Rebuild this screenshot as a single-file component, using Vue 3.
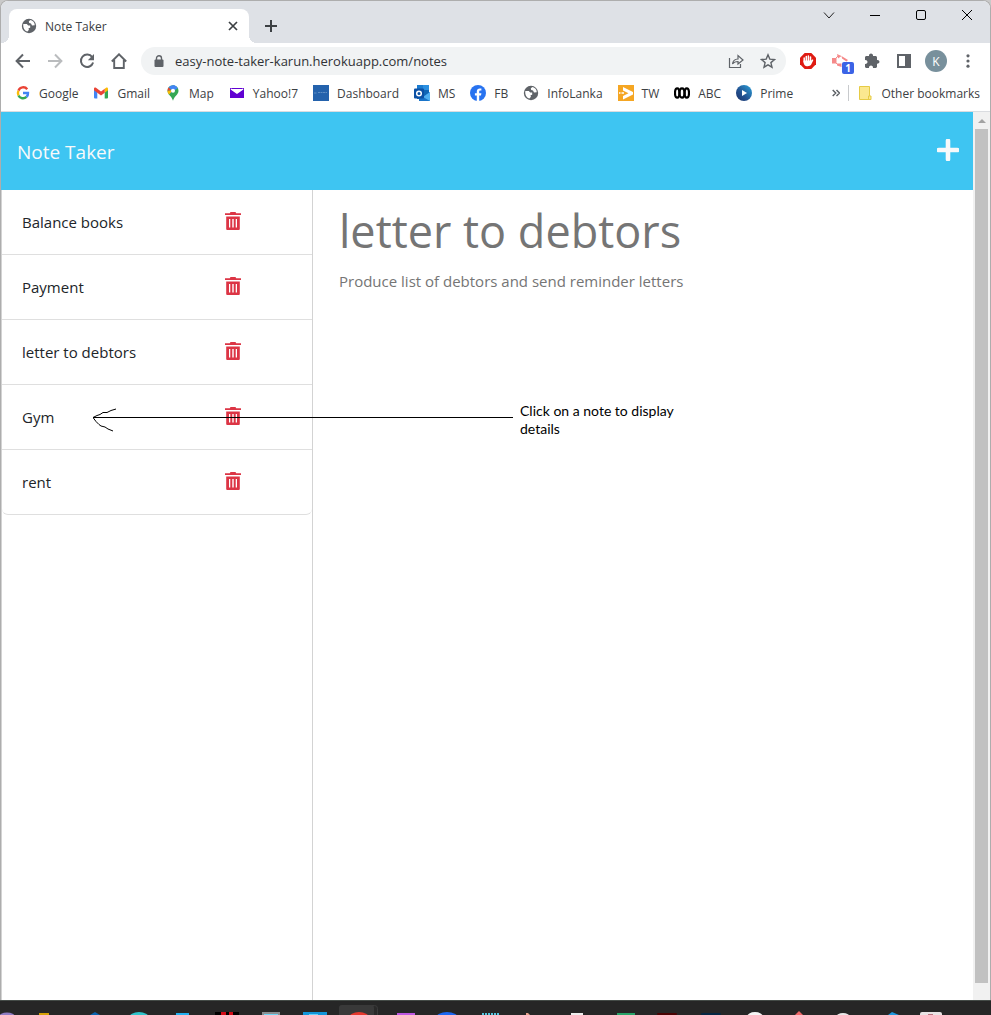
<script setup>
import { ref } from 'vue'

const notes = ref([
  { id: 1, title: 'Balance books' },
  { id: 2, title: 'Payment' },
  { id: 3, title: 'letter to debtors' },
  { id: 4, title: 'Gym' },
  { id: 5, title: 'rent' },
])
const activeTitle = ref('letter to debtors')
const activeText = ref('Produce list of debtors and send reminder letters')
const address = 'easy-note-taker-karun.herokuapp.com/notes'
</script>

<template>
  <div class="desktop">
    <div class="window">
      <header class="tabstrip">
        <div class="tab">
          <svg class="i16" viewBox="0 0 16 16"><circle cx="8" cy="8" r="7.2" fill="#5f6368" /><path d="M2.300 6h3.500l1.400 1.500h2v2.200l-1.700.6.400 1.400L6.500 13.600C3.800 12.800 1.800 10 2.300 6zM9.500 2.100 7.800 3.300l.4 1.700 1.800.6 1 1.800 2.800-.1C13.600 4.500 12 2.600 9.500 2.100z" fill="#fff" /></svg>
          <span class="tab-title">Note Taker</span>
          <button class="bare" aria-label="Close tab"><svg width="10" height="10" viewBox="0 0 10 10"><path d="M1 1l8 8M9 1L1 9" stroke="#3c4043" stroke-width="1.700" /></svg></button>
        </div>
        <button class="bare newtab" aria-label="New tab"><svg width="12" height="12" viewBox="0 0 12 12"><path d="M6 0v12M0 6h12" stroke="#3c4043" stroke-width="2" /></svg></button>
        <div class="controls">
          <button class="bare" aria-label="Search tabs"><svg width="12" height="12" viewBox="0 0 12 12"><path d="M1 3.500l5 5.500 5-5.500" stroke="#222" fill="none" /></svg></button>
          <button class="bare" aria-label="Minimize"><svg width="12" height="12" viewBox="0 0 12 12"><path d="M1 6.500h10" stroke="#000" /></svg></button>
          <button class="bare" aria-label="Maximize"><svg width="12" height="12" viewBox="0 0 12 12"><rect x="1.500" y="1.500" width="9" height="9" rx="1.500" stroke="#000" fill="none" /></svg></button>
          <button class="bare" aria-label="Close"><svg width="12" height="12" viewBox="0 0 12 12"><path d="M1 1l10 10M11 1L1 11" stroke="#000" /></svg></button>
        </div>
      </header>

      <div class="toolbar">
        <nav class="navs" aria-label="Navigation">
          <button class="bare" aria-label="Back"><svg class="i16" viewBox="0 0 16 16"><path d="M15 8H2M8 1.500L1.600 8 8 14.500" stroke="#5f6368" stroke-width="2" fill="none" /></svg></button>
          <button class="bare" aria-label="Forward"><svg class="i16" viewBox="0 0 16 16"><path d="M1 8h13M8 1.500L14.400 8 8 14.500" stroke="#babcbe" stroke-width="2" fill="none" /></svg></button>
          <button class="bare" aria-label="Reload"><svg class="i16" viewBox="0 0 16 16"><path d="M13.200 4.200A6.200 6.200 0 1 0 14.100 9.500" stroke="#5f6368" stroke-width="2" fill="none" /><path d="M15 1v6.200H8.800z" fill="#5f6368" /></svg></button>
          <button class="bare" aria-label="Home"><svg class="i16" viewBox="0 0 16 16"><path d="M.8 8.500L8 1.300l7.200 7.200M3.200 7v8h9.600V7" stroke="#5f6368" stroke-width="1.900" fill="none" /></svg></button>
        </nav>
        <div class="omnibox">
          <svg class="lock" width="10" height="12" viewBox="0 0 10 12"><rect x=".5" y="4.500" width="9" height="7.500" rx="1" fill="#5f6368" /><path d="M2.500 5V3.200a2.500 2.500 0 0 1 5 0V5" stroke="#5f6368" stroke-width="1.400" fill="none" /></svg>
          <input class="address" :value="address" aria-label="Address" />
          <button class="bare" aria-label="Share"><svg class="i16" viewBox="0 0 16 16"><path d="M1.500 5v9.500h11V11M4.500 11c.4-3.400 2.500-4.900 5.500-5V2.500L15 7l-5 4V8.500c-2.500 0-4.300.8-5.500 2.500z" stroke="#5f6368" stroke-width="1.200" fill="none" /></svg></button>
          <button class="bare" aria-label="Bookmark"><svg class="i16" viewBox="0 0 16 16"><path d="M8 1.800l1.800 4.300 4.700.4-3.600 3.100 1.100 4.600L8 11.800l-4 2.400 1.100-4.600-3.600-3.100 4.700-.4z" stroke="#5f6368" stroke-width="1.400" fill="none" /></svg></button>
        </div>
        <div class="extensions">
          <button class="bare" aria-label="Ad blocker"><svg class="i16" viewBox="0 0 16 16"><path d="M4.700 0h6.600L16 4.700v6.600L11.300 16H4.700L0 11.300V4.700z" fill="#df1b12" /><path d="M4.200 9V5M6.300 8V3.500M8.400 8V3M10.500 8.500V4" stroke="#fff" stroke-width="1.500" stroke-linecap="round" /><path d="M3.500 7.500h7.700l1-.9c.7-.4 1.300.2 1 .8l-2 4.200c-1 2-5.200 2.200-6.500.6-1-1.200-1.200-2.700-1.200-4.700z" fill="#fff" /></svg></button>
          <button class="bare ext" aria-label="Extension, 1 notice">
            <svg class="i16" viewBox="0 0 16 16"><path d="M0 5h4.500v5.500H0zM5 1l4.500 2-3.500 2.500zM9.500 3L16 7l-1.500 1.500L10 5.500zM5 10.500h4.500V14L5 12.500z" fill="#f58a8a" /><path d="M4 5l2-2M4 10l2 2" stroke="#f58a8a" /></svg>
            <span class="badge">1</span>
          </button>
          <button class="bare" aria-label="Extensions"><svg class="i16" viewBox="0 0 16 16"><path d="M1 4.500C1 3.700 1.600 3 2.500 3H5c-.5-3.500 4.500-3.500 4 0h2.500c.8 0 1.500.7 1.500 1.500V7c3.300-.3 3.300 4 0 3.800v2.700c0 .8-.7 1.500-1.500 1.500H9c.2-3.300-4.200-3.300-4 0H2.500c-.8 0-1.500-.7-1.500-1.500V11c3.300.2 3.300-4 0-3.900z" fill="#5f6368" /></svg></button>
          <button class="bare" aria-label="Side panel"><svg class="i16" viewBox="0 0 16 16"><path d="M1 1h14v14H1zM3 3v10h6V3z" fill="#5f6368" fill-rule="evenodd" /></svg></button>
          <button class="avatar" aria-label="Profile">K</button>
          <button class="bare" aria-label="Menu"><svg class="i16" viewBox="0 0 16 16" fill="#5f6368"><circle cx="8" cy="2.800" r="1.600" /><circle cx="8" cy="8" r="1.600" /><circle cx="8" cy="13.200" r="1.600" /></svg></button>
        </div>
      </div>

      <nav class="bookmarks" aria-label="Bookmarks">
        <a href="#"><svg class="i16" viewBox="0 0 16 16" fill="none" stroke-width="2.400"><path d="M12.200 4.200A5 5 0 0 0 3.500 5.700" stroke="#ea4335" /><path d="M3.500 5.700a5 5 0 0 0 0 4.700" stroke="#fbbc05" /><path d="M3.500 10.400a5 5 0 0 0 8 1.500" stroke="#34a853" /><path d="M11.500 11.900A5 5 0 0 0 13 8H8" stroke="#4285f4" /></svg>Google</a>
        <a href="#"><svg class="i16" viewBox="0 0 16 16"><path d="M1 4.500l3.300 2.400V13.500H2a1 1 0 0 1-1-1z" fill="#4285f4" /><path d="M15 4.500l-3.300 2.400v6.600H14a1 1 0 0 0 1-1z" fill="#34a853" /><path d="M11.700 3.700L13 2.700c.8-.6 2 0 2 1v1.500l-3.300 2.500z" fill="#fbbc04" /><path d="M1 3.700c0-1.200 1.200-1.600 2-1L8 6.400l3.700-2.700v4L8 10.400 4.300 7.700 1 5.200z" fill="#ea4335" /></svg>Gmail</a>
        <a href="#"><svg class="i16" viewBox="0 0 16 16"><path d="M8 .2a5.500 5.500 0 0 1 5.500 5.500c0 4-4.300 5.300-5.500 10.100-1.200-4.800-5.500-6.100-5.500-10.100A5.500 5.500 0 0 1 8 .2z" fill="#34a853" /><path d="M3.700 9.200L12.800 3.200A5.500 5.500 0 0 0 8 .2z" fill="#4285f4" /><path d="M2.500 5.700c0 1.500.6 2.700 1.600 3.900L8 5z" fill="#fbbc04" /><path d="M3.700 2.200A5.500 5.500 0 0 0 2.500 5.700L6 5z" fill="#ea4335" /><path d="M8 .2a5.500 5.500 0 0 0-4.300 2L6.500 5 10 .6z" fill="#4285f4" /><circle cx="8" cy="5.700" r="2" fill="#fff" /></svg>Map</a>
        <a href="#"><svg class="i16" viewBox="0 0 16 16"><rect x="1" y="3" width="14" height="10" rx=".5" fill="#6001d2" /><path d="M2 4l6 4 6-4" stroke="#fff" stroke-width="1.500" fill="#fff" /></svg>Yahoo!7</a>
        <a href="#"><svg class="i16" viewBox="0 0 16 16"><path d="M0 0h16v16H0z" fill="#2462ac" /><path d="M1 8h3M5 7.500h9" stroke="#5d8dc4" stroke-dasharray="2 .5" /></svg>Dashboard</a>
        <a href="#"><svg class="i16" viewBox="0 0 16 16"><path d="M3 0h12v14H3z" fill="#1066b5" /><path d="M9 0h6v5H9z" fill="#2b8fe0" /><path d="M3 0h6v4H3z" fill="#1a7bd0" /><path d="M5 8l5 3 6-4v9H5z" fill="#1a74c9" /><path d="M9 12l7-5v9z" fill="#50b0f1" /><rect y="3.500" width="10" height="10" rx="1" fill="#0c51a5" /><circle cx="5" cy="8.500" r="2.300" stroke="#fff" stroke-width="1.500" fill="none" /></svg>MS</a>
        <a href="#"><svg class="i16" viewBox="0 0 16 16"><circle cx="8" cy="8" r="8" fill="#2873f0" /><path d="M6.800 16v-5.500H4.900V8.200h1.900V6.500c0-2 1.200-3.100 3-3.100l1.600.1v2h-.9c-1 0-1.300.6-1.300 1.200v1.500h2.200l-.4 2.300H9.200V16z" fill="#fff" /></svg>FB</a>
        <a href="#"><svg class="i16" viewBox="0 0 16 16"><circle cx="8" cy="8" r="7.200" fill="#5f6368" /><path d="M2.300 6h3.500l1.400 1.500h2v2.200l-1.700.6.400 1.400L6.500 13.600C3.800 12.800 1.800 10 2.300 6zM9.500 2.100 7.800 3.300l.4 1.700 1.800.6 1 1.800 2.800-.1C13.600 4.500 12 2.600 9.500 2.100z" fill="#fff" /></svg>InfoLanka</a>
        <a href="#"><svg class="i16" viewBox="0 0 16 16"><path d="M0 0h16v16H0z" fill="#f5a623" /><path d="M5 2l10 5v2.500L5 14.500V11l5.500-2.700L5 5.500z" fill="#fff" /><path d="M1 8h1.500M3.500 8H6" stroke="#fff" stroke-width="1.500" /></svg>TW</a>
        <a href="#"><svg class="i16" viewBox="0 0 16 16" fill="none" stroke="#000" stroke-width="2.200"><ellipse cx="3.200" cy="8" rx="2.200" ry="4.700" /><ellipse cx="8" cy="8" rx="2.500" ry="4.700" /><ellipse cx="12.800" cy="8" rx="2.200" ry="4.700" /></svg>ABC</a>
        <a href="#"><svg class="i16" viewBox="0 0 16 16"><defs><linearGradient id="prime" x1="1" y1="0" x2="0" y2="1"><stop offset="0" stop-color="#2ba3dc" /><stop offset=".6" stop-color="#22508f" /><stop offset="1" stop-color="#1c3369" /></linearGradient></defs><circle cx="8" cy="8" r="8" fill="url(#prime)" /><path d="M6 5l5 3-5 3z" fill="#fff" /></svg>Prime</a>
        <div class="other">
          <button class="bare" aria-label="More bookmarks"><svg width="8" height="8" viewBox="0 0 8 8"><path d="M.7 1l3 3-3 3M4.500 1l3 3-3 3" stroke="#5f6368" stroke-width="1.500" fill="none" /></svg></button>
          <span class="divider"></span>
          <a href="#"><svg class="i16" viewBox="0 0 16 16"><path d="M2.500 1.500h10v9.500h1.500v3.500H2.500z" fill="#fbe88f" stroke="#e6cb45" /><path d="M11.500 14.500V11h1" stroke="#e6cb45" fill="none" /></svg>Other bookmarks</a>
        </div>
      </nav>

      <div class="viewport">
        <main class="page">
          <header class="banner">
            <a class="brand" href="#">Note Taker</a>
            <button class="bare" aria-label="New note"><svg width="22" height="22" viewBox="0 0 22 22"><path d="M11 1.800v18.400M1.800 11h18.400" stroke="#f8f9fa" stroke-width="4.600" stroke-linecap="round" /></svg></button>
          </header>
          <div class="columns">
            <aside class="sidebar">
              <ul class="notes">
                <li v-for="note in notes" :key="note.id" class="note">
                  <button class="bare note-title">{{ note.title }}</button>
                  <button class="bare trash" :aria-label="'Delete ' + note.title">
                    <svg width="16" height="18" viewBox="0 0 16 18"><path d="M5.500 0h5l.7 1.200H16V3H0V1.200h4.800zM1.200 4.500h13.600V17q0 1-1 1H2.200q-1 0-1-1zM4 7v8.500h1.300V7zM7.300 7v8.500h1.400V7zM10.700 7v8.500H12V7z" fill="#dc3545" fill-rule="evenodd" /></svg>
                  </button>
                </li>
              </ul>
            </aside>
            <section class="detail">
              <input class="detail-title" :value="activeTitle" aria-label="Note title" readonly />
              <textarea class="detail-text" :value="activeText" aria-label="Note text" readonly></textarea>
            </section>
          </div>
          <div class="callout">
            <svg width="420" height="24" viewBox="0 0 420 24" fill="none" stroke="#000"><path d="M0 9.500h420" /><path d="M0 9.500l4-2 3-1 3-2h4l4-2 5-1.500M0 9.500l3 4 3 3 2 1.500 4 1 3 2 5 2" /></svg>
            <p>Click on a note to display details</p>
          </div>
        </main>
        <div class="scrollbar">
          <svg width="8" height="4" viewBox="0 0 8 4"><path d="M0 4l4-4 4 4z" fill="#a3a3a3" /></svg>
          <span class="thumb"></span>
        </div>
      </div>
    </div>
    <footer class="taskbar">
      <svg width="991" height="14" viewBox="0 0 991 14">
        <rect x="339.500" y="4.500" width="38" height="20" rx="3" fill="#292929" stroke="#3b3b3b" />
        <rect x="339" y="4" width="35" height="20" rx="3" fill="#393939" />
        <ellipse cx="7" cy="16" rx="8" ry="4.500" fill="#8e7cc3" />
        <rect x="39" y="12" width="10" height="2" fill="#d6a106" />
        <path d="M90 14l5-3 5 3z" fill="#0b63ae" />
        <ellipse cx="139" cy="17" rx="10" ry="6" fill="#2fc4cb" />
        <rect x="176" y="12" width="13" height="2" fill="#22b1f2" />
        <rect x="215" y="11" width="24" height="3" fill="#000" /><path d="M221 11h5v3h-5zM229 11h4v3h-4z" fill="#d10d18" />
        <rect x="262" y="11" width="18" height="3" fill="#8b8f92" /><rect x="264" y="13" width="14" height="1" fill="#6fd5f5" />
        <rect x="303" y="11" width="24" height="3" fill="#1195d9" /><rect x="309" y="13" width="9" height="1" fill="#65d0fa" />
        <ellipse cx="359" cy="17" rx="10" ry="6" fill="#e6392e" />
        <rect x="397" y="12" width="18" height="2" fill="#bd57e2" />
        <ellipse cx="447" cy="17" rx="11" ry="6" fill="#1b67f2" />
        <path d="M482 13h18" stroke="#53c5df" stroke-width="2" stroke-dasharray="2 1" />
        <path d="M526 14v-2h2l2 2z" fill="#e6a38c" />
        <rect x="571" y="12" width="12" height="2" fill="#eee" />
        <rect x="617" y="12" width="18" height="2" fill="#27a368" />
        <rect x="657" y="12" width="20" height="2" rx="1" fill="#4b0303" />
        <rect x="701" y="12" width="20" height="2" rx="1" fill="#062743" />
        <ellipse cx="755" cy="16" rx="8" ry="5" fill="#f5f5f5" />
        <path d="M795 14l4-4 4 4z" fill="#ee6868" />
        <ellipse cx="843" cy="16" rx="7" ry="4" fill="#e9e9e9" />
        <path d="M888 14l4-3 7 3z" fill="#1c98df" />
        <rect x="920" y="11" width="22" height="6" rx="2" fill="#e9e3e4" /><path d="M928 13.500h5" stroke="#b97580" />
      </svg>
    </footer>
  </div>
</template>

<style>
body {
  margin: 0;
  overflow: hidden;
}
</style>

<style scoped>
* {
  box-sizing: border-box;
}
.desktop {
  display: flex;
  flex-direction: column;
  height: 100vh;
  background: #c9c9c9;
  font-family: "Open Sans", "Noto Sans", sans-serif;
}
.window {
  flex: 1;
  min-height: 0;
  display: flex;
  flex-direction: column;
  background: #fff;
  border: 1px solid #adadad;
  border-bottom: 0;
  border-radius: 8px 8px 0 0;
  overflow: hidden;
}
.bare {
  display: flex;
  align-items: center;
  justify-content: center;
  padding: 0;
  border: 0;
  background: none;
  font: inherit;
  color: inherit;
}
svg {
  display: block;
  flex: none;
}
.i16 {
  width: 16px;
  height: 16px;
}
.tabstrip {
  display: flex;
  height: 42px;
  padding: 8px 17px 0 8px;
  background: #dee1e6;
}
.tab {
  position: relative;
  display: flex;
  align-items: center;
  width: 240px;
  padding: 0 11px 0 12px;
  gap: 8px;
  background: #fff;
  border-radius: 8px 8px 0 0;
  font-size: 12px;
  color: #3c4043;
}
.tab::before,
.tab::after {
  content: "";
  position: absolute;
  bottom: 0;
  width: 8px;
  height: 8px;
}
.tab::before {
  right: 100%;
  background: radial-gradient(circle at 0 0, #dee1e6 8px, #fff 8px);
}
.tab::after {
  left: 100%;
  background: radial-gradient(circle at 100% 0, #dee1e6 8px, #fff 8px);
}
.tab-title {
  flex: 1;
}
.newtab {
  margin-left: 16px;
}
.controls {
  display: flex;
  align-items: flex-start;
  gap: 34px;
  margin-left: auto;
}
.toolbar {
  display: flex;
  align-items: center;
  height: 36px;
  padding: 0 14px;
}
.navs {
  display: flex;
  gap: 16px;
}
.omnibox {
  flex: 1;
  display: flex;
  align-items: center;
  gap: 16px;
  height: 28px;
  margin: 0 14px;
  padding: 0 10px 0 13px;
  border-radius: 14px;
  background: #f1f3f4;
}
.lock {
  margin-right: -5px;
}
.address {
  flex: 1;
  min-width: 0;
  padding: 0;
  border: 0;
  outline: 0;
  background: none;
  font: 13px "Open Sans", sans-serif;
  color: #303236;
}
.extensions {
  display: flex;
  align-items: center;
  gap: 16px;
}
.ext {
  position: relative;
}
.badge {
  position: absolute;
  left: 10px;
  top: 9px;
  width: 12px;
  height: 12px;
  border-radius: 2px;
  background: #3b63e6;
  color: #fff;
  font-size: 10px;
  line-height: 12px;
  font-weight: 700;
}
.avatar {
  width: 22px;
  height: 22px;
  margin: 0 -3px;
  padding: 0;
  border: 0;
  border-radius: 50%;
  background: #78909c;
  color: #fff;
  font: 12px "Open Sans", sans-serif;
}
.bookmarks {
  display: flex;
  align-items: center;
  gap: 15px;
  height: 33px;
  padding: 0 10px 4px 14px;
  border-bottom: 1px solid #dadce0;
  font-size: 12px;
}
.bookmarks a {
  display: flex;
  align-items: center;
  gap: 8px;
  color: #3c4043;
  text-decoration: none;
  white-space: nowrap;
}
.other {
  display: flex;
  align-items: center;
  gap: 8px;
  margin-left: auto;
}
.divider {
  width: 1px;
  height: 16px;
  background: #c8cacd;
}
.viewport {
  flex: 1;
  min-height: 0;
  display: flex;
}
.page {
  position: relative;
  flex: 1;
  display: flex;
  flex-direction: column;
}
.banner {
  display: flex;
  align-items: center;
  justify-content: space-between;
  height: 78px;
  padding: 0 14px 2px 16px;
  background: #3ec5f2;
}
.brand {
  padding-top: 4px;
  color: #f8f9fa;
  font-size: 19px;
  text-decoration: none;
}
.columns {
  flex: 1;
  display: grid;
  grid-template-columns: 32.1% 1fr;
}
.sidebar {
  border: 1px solid #d3d3d3;
  border-width: 0 1px;
}
.notes {
  margin: 0;
  padding: 0;
  list-style: none;
}
.note {
  display: grid;
  grid-template-columns: 3fr 1fr;
  align-items: center;
  height: 65px;
  padding: 0 20px;
  border-bottom: 1px solid #dfdfdf;
  color: #212529;
  font-size: 15px;
}
.note:last-child {
  border-radius: 0 0 6px 6px;
}
.note-title,
.trash {
  justify-content: flex-start;
}
.trash {
  padding-bottom: 2px;
}
.detail {
  padding: 11px 24px;
}
.detail-title,
.detail-text {
  display: block;
  width: 100%;
  padding: 0 2px;
  border: 0;
  outline: 0;
  resize: none;
  background: none;
  font-family: inherit;
  color: #757575;
}
.detail-title {
  height: 58px;
  font-size: 45px;
}
.detail-text {
  height: 300px;
  margin-top: 10px;
  font-size: 15px;
  line-height: 24px;
}
.callout {
  position: absolute;
  left: 92px;
  top: 290px;
  display: flex;
  align-items: flex-start;
  gap: 7px;
  width: 590px;
}
.callout svg {
  margin-top: 6px;
}
.callout p {
  margin: 0;
  color: #000;
  font: 14px/18px Lato, sans-serif;
}
.scrollbar {
  display: flex;
  flex-direction: column;
  align-items: center;
  width: 17px;
  padding: 7px 2px 17px;
  background: #f1f1f1;
}
.thumb {
  flex: 1;
  width: 13px;
  margin-top: 6px;
  background: #c1c1c1;
}
.taskbar {
  height: 15px;
  border-top: 1px solid #444b47;
  background: #262626;
  overflow: hidden;
}
</style>
